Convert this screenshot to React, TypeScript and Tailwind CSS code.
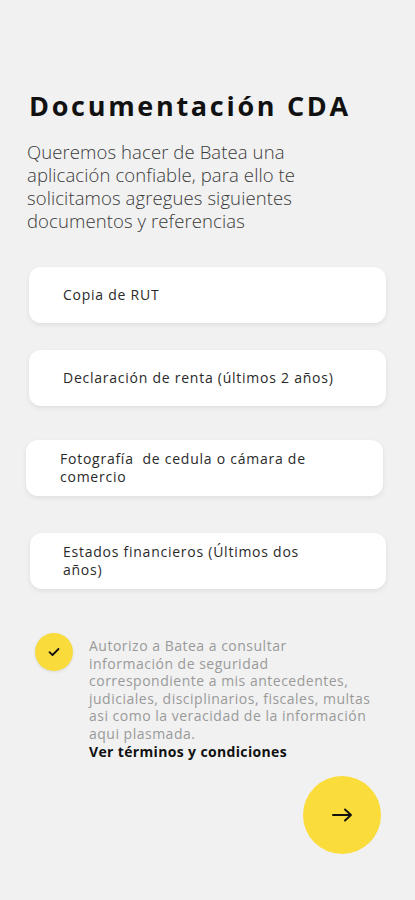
import React from 'react';

const docs = [
    { lines: ['Copia de RUT'], cls: 'ml-[29px] mr-[29px] pl-[34px]' },
    { lines: ['Declaración de renta (últimos 2 años)'], cls: 'ml-[29px] mr-[29px] mt-[27px] pl-[34px]' },
    { lines: ['Fotografía  de cedula o cámara de', 'comercio'], cls: 'ml-[26px] mr-[32px] mt-[34px] pl-[34px]' },
    { lines: ['Estados financieros (Últimos dos', 'años)'], cls: 'ml-[30px] mr-[29px] mt-[37px] pl-[33px]' },
];

const App = () => {
    return (
        <div className="w-[415px] h-[900px] bg-[#f1f1f1] flex flex-col font-['Open_Sans',sans-serif] overflow-hidden">
            <h1 className="pl-[29px] pt-[88px] text-[27px] leading-[36px] font-bold text-[#111] tracking-[2.7px]">
                Documentación CDA
            </h1>
            <p className="pl-[27px] mt-[16px] text-[18.5px] leading-[23px] text-[#3a3a3a] font-light tracking-[0.1px]">
                Queremos hacer de Batea una<br />
                aplicación confiable, para ello te<br />
                solicitamos agregues siguientes<br />
                documentos y referencias
            </p>

            <div className="flex flex-col mt-[35px]">
                {docs.map((d) => (
                    <div
                        key={d.lines[0]}
                        className={`${d.cls} h-[56px] bg-white rounded-[12px] shadow-[0_2px_5px_rgba(0,0,0,0.08)] flex items-center`}
                    >
                        <span className="text-[14px] leading-[18px] text-[#2a2a2a] tracking-[0.75px] whitespace-pre">
                            {d.lines.join('\n')}
                        </span>
                    </div>
                ))}
            </div>

            <div className="flex mt-[46px] pl-[35px] gap-[16px]">
                <div className="w-[38px] h-[38px] shrink-0 rounded-full bg-[#f9dc3c] flex items-center justify-center mt-[-2px] shadow-[0_1px_3px_rgba(0,0,0,0.1)]">
                    <svg width="12" height="10" viewBox="0 0 12 10" fill="none">
                        <path d="M1.5 5.2 L4.5 8 L10.5 2" stroke="#111" strokeWidth="1.8" strokeLinecap="round" strokeLinejoin="round" />
                    </svg>
                </div>
                <div className="text-[14px] leading-[17.6px] text-[#9a9a9a] pt-[2px] tracking-[0.5px] whitespace-nowrap">
                    <p>
                        Autorizo a Batea a consultar<br />
                        información de seguridad<br />
                        correspondiente a mis antecedentes,<br />
                        judiciales, disciplinarios, fiscales, multas<br />
                        asi como la veracidad de la información<br />
                        aqui plasmada.
                    </p>
                    <p className="font-bold text-[#111] tracking-[0.35px]">Ver términos y condiciones</p>
                </div>
            </div>

            <div className="flex justify-end pr-[34px] mt-[16px]">
                <button className="w-[78px] h-[78px] rounded-full bg-[#fadc3a] flex items-center justify-center">
                    <svg width="22" height="16" viewBox="0 0 22 16" fill="none">
                        <path d="M2 8 H20 M14 2.5 L20 8 L14 13.5" stroke="#111" strokeWidth="1.9" strokeLinecap="round" strokeLinejoin="round" />
                    </svg>
                </button>
            </div>
        </div>
    );
};

export default App;
